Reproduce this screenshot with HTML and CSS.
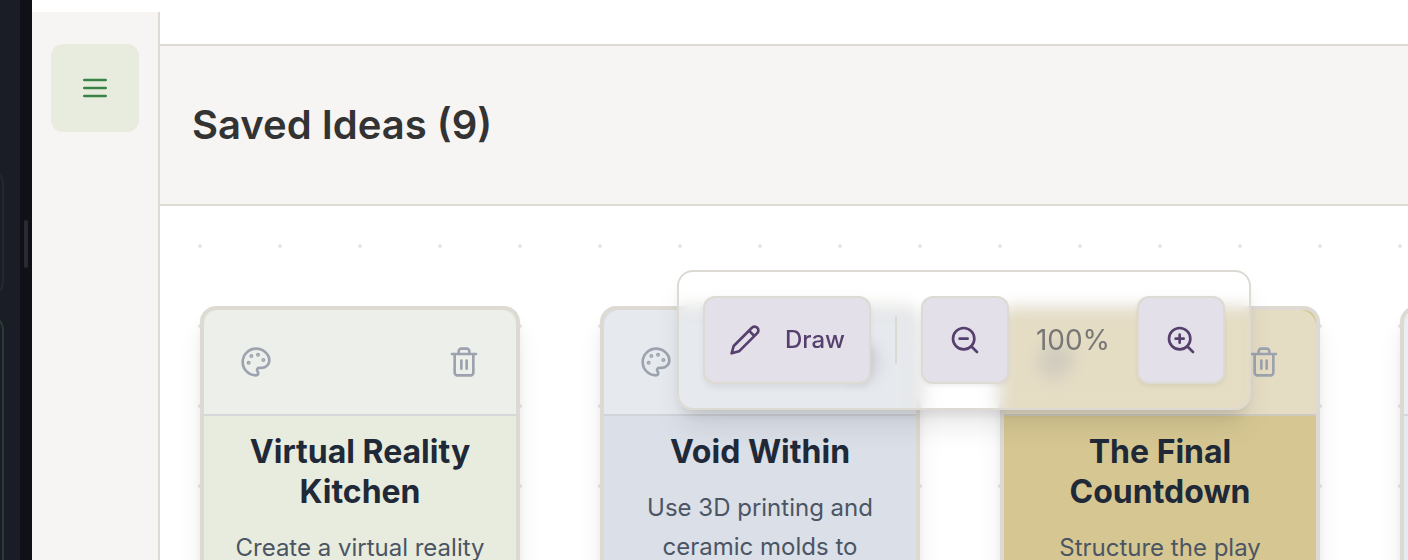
FILE: index.html
```html
<!DOCTYPE html>
<html lang="en">
<head>
<meta charset="utf-8">
<title>Saved Ideas</title>
<link rel="stylesheet" href="styles.css">
</head>
<body>
<svg class="defs" width="0" height="0">
  <symbol id="palette" viewBox="0 0 24 24"><circle cx="13.5" cy="6.5" r=".5" fill="currentColor"/><circle cx="17.5" cy="10.5" r=".5" fill="currentColor"/><circle cx="8.5" cy="7.5" r=".5" fill="currentColor"/><circle cx="6.5" cy="12.5" r=".5" fill="currentColor"/><path d="M12 2C6.5 2 2 6.5 2 12s4.500 10 10 10c.926 0 1.648-.746 1.648-1.688 0-.437-.18-.835-.437-1.125-.29-.289-.438-.652-.438-1.125a1.640 1.640 0 0 1 1.668-1.668h1.996c3.051 0 5.555-2.503 5.555-5.554C21.965 6.012 17.461 2 12 2z"/></symbol>
  <symbol id="trash" viewBox="0 0 24 24"><path d="M3 6h18M19 6v14c0 1-1 2-2 2H7c-1 0-2-1-2-2V6M8 6V4c0-1 1-2 2-2h4c1 0 2 1 2 2v2M10 11v6M14 11v6"/></symbol>
</svg>
<div class="app">
  <aside class="panel">
    <div class="panel-card"></div>
    <div class="panel-card panel-card-active"></div>
  </aside>
  <div class="resizer"><span class="grip"></span></div>
  <nav class="sidebar">
    <button class="menu" aria-label="Menu"><svg class="icon" viewBox="0 0 24 24"><path d="M4 6h16M4 12h16M4 18h16"/></svg></button>
  </nav>
  <main class="main">
    <header class="header"><h1>Saved Ideas (9)</h1></header>
    <section class="canvas">
      <article class="card green">
        <div class="card-head"><svg class="icon"><use href="#palette"/></svg><svg class="icon"><use href="#trash"/></svg></div>
        <div class="card-body"><h2>Virtual Reality Kitchen</h2><p>Create a virtual reality</p></div>
      </article>
      <article class="card blue">
        <div class="card-head"><svg class="icon"><use href="#palette"/></svg><svg class="icon"><use href="#trash"/></svg></div>
        <div class="card-body"><h2>Void Within</h2><p>Use 3D printing and ceramic molds to</p></div>
      </article>
      <article class="card gold">
        <div class="card-head"><svg class="icon"><use href="#palette"/></svg><svg class="icon"><use href="#trash"/></svg></div>
        <div class="card-body"><h2>The Final Countdown</h2><p>Structure the play</p></div>
      </article>
      <article class="card sky">
        <div class="card-head"></div>
        <div class="card-body"></div>
      </article>
    </section>
  </main>
  <div class="toolbar">
    <button class="tool draw"><svg class="icon" viewBox="0 0 24 24"><path d="M17 3a2.850 2.830 0 1 1 4 4L7.500 20.500 2 22l1.500-5.500ZM15 5l4 4"/></svg><span class="tool-label">Draw</span></button>
    <span class="divider"></span>
    <button class="tool" aria-label="Zoom out"><svg class="icon" viewBox="0 0 24 24"><circle cx="11" cy="11" r="8"/><path d="M21 21l-4.350-4.350M8 11h6"/></svg></button>
    <span class="zoom">100%</span>
    <button class="tool" aria-label="Zoom in"><svg class="icon" viewBox="0 0 24 24"><circle cx="11" cy="11" r="8"/><path d="M21 21l-4.350-4.350M11 8v6M8 11h6"/></svg></button>
  </div>
</div>
</body>
</html>
```
FILE: styles.css
```css
* { box-sizing: border-box; margin: 0; }
body { font-family: Inter, "Liberation Sans", sans-serif; background: #fff; overflow: hidden; }
button { font: inherit; padding: 0; border: 0; }
.defs { position: absolute; }
.app { position: relative; display: flex; width: 1408px; height: 560px; overflow: hidden; }
.icon { display: block; flex: none; width: 32px; height: 32px; fill: none; stroke: currentColor; stroke-width: 2; stroke-linecap: round; stroke-linejoin: round; }

.panel { flex: none; width: 20px; height: 560px; padding-top: 168px; background: #1a1d25; display: flex; flex-direction: column; align-items: flex-start; gap: 16px; overflow: hidden; }
.panel-card { flex: none; width: 64px; height: 130px; margin-left: -60px; border: 2px solid #25272f; border-radius: 16px; }
.panel-card-active { height: 300px; border-color: #2d3a38; }
.resizer { flex: none; width: 12px; height: 560px; background: #101116; display: flex; justify-content: center; padding-top: 220px; }
.grip { width: 4px; height: 48px; border-radius: 2px; background: #2a2a35; }

.sidebar { flex: none; width: 128px; margin-top: 12px; padding-top: 32px; background: #f6f5f3; border-right: 2px solid #dddbd4; display: flex; flex-direction: column; align-items: center; }
.menu { width: 88px; height: 88px; border-radius: 12px; background: #e8ecdf; color: #3b8247; display: grid; place-items: center; }

.main { flex: 1; min-width: 0; padding-top: 44px; display: flex; flex-direction: column; }
.header { flex: none; height: 162px; padding: 0 32px; background: #f6f5f3; border: solid #dddbd4; border-width: 2px 0; display: flex; align-items: center; }
h1 { font-size: 40px; line-height: 56px; font-weight: 600; color: #333; }
.canvas { flex: 1; min-height: 0; padding: 100px 0 0 40px; display: flex; gap: 80px; overflow: hidden; background: #fff radial-gradient(circle, #e8e8e8 2px, transparent 2px) 0 0 / 80px 80px; }

.card { flex: none; width: 320px; height: 400px; border: 4px solid #dddad4; border-radius: 16px; box-shadow: 0 20px 30px -6px rgba(0,0,0,.1), 0 8px 12px -4px rgba(0,0,0,.1); }
.card-head { height: 106px; padding: 0 36px; border-bottom: 2px solid rgba(156,163,175,.3); border-radius: 16px 16px 0 0; display: flex; align-items: center; justify-content: space-between; color: #9ca3af; }
.card-body { padding: 16px 24px; text-align: center; }
h2 { font-size: 32px; line-height: 40px; font-weight: 700; color: #1f2937; margin-bottom: 16px; }
.card p { font-size: 24px; line-height: 39px; color: #4b5563; }
.green { background: #e8ecdf; }
.green .card-head { background-color: #edefea; }
.blue { background: #dbdfe8; }
.blue .card-head { background-color: #e6e9ed; }
.gold { background: #d6c792; }
.gold .card-head { background-color: #e5dcc4; }
.sky { background: #e3ecf1; }
.sky .card-head { background-color: #e9eff3; }

/* floats above the canvas */
.toolbar { position: absolute; left: 677px; top: 270px; height: 140px; padding: 24px; display: flex; align-items: center; gap: 24px; border: 2px solid #dddad4; border-radius: 16px; backdrop-filter: blur(8px); box-shadow: 0 20px 30px -6px rgba(0,0,0,.1), 0 8px 12px -4px rgba(0,0,0,.1); }
.tool { width: 88px; height: 88px; border: 2px solid #dddad4; border-radius: 12px; background: #e4e0e9; color: #553f6c; display: flex; align-items: center; justify-content: center; gap: 24px; font-size: 24px; font-weight: 500; box-shadow: 0 2px 4px rgba(0,0,0,.06); }
.draw { width: 168px; box-shadow: 0 4px 6px rgba(0,0,0,.06); }
.tool-label { padding-bottom: 2px; }
.divider { width: 2px; height: 48px; background: #dddad4; }
.zoom { width: 80px; text-align: center; font-size: 28px; color: #777; }
```
